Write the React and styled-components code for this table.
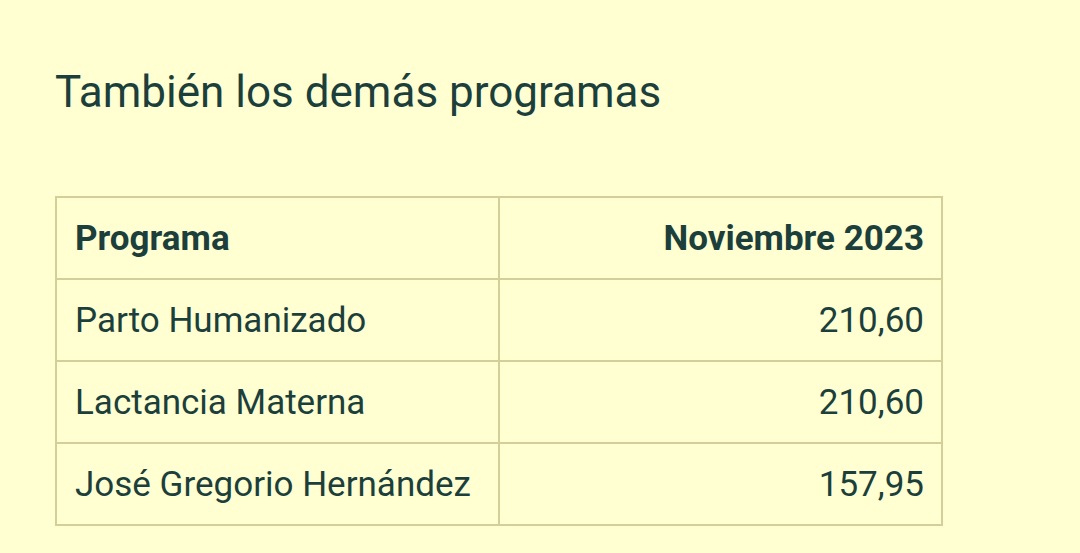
import React from "react";
import styled, { createGlobalStyle } from "styled-components";

const GlobalStyle = createGlobalStyle`
    html, body {
        margin: 0;
        padding: 0;
        background: #ffffd2;
    }
    body {
        font-family: Roboto, "Noto Sans", sans-serif;
        color: #1c3f3c;
    }
`;

const Page = styled.div`
    width: 1080px;
    height: 553px;
    padding: 66px 55px 0;
    box-sizing: border-box;
    overflow: hidden;
`;

const Title = styled.h2`
    margin: 0 0 78px;
    font-size: 44px;
    font-weight: 400;
    line-height: 52px;
`;

const Table = styled.table`
    width: 888px;
    border-collapse: collapse;
    font-size: 35px;
`;

const Cell = styled.td`
    border: 2px solid #d4cf98;
    height: 82px;
    padding: 0 17px 0 18px;
    box-sizing: border-box;
    text-align: ${({ $align }) => $align || "left"};
    font-weight: ${({ $bold }) => ($bold ? 700 : 400)};
    width: 50%;
`;

const rows = [
    ["Parto Humanizado", "210,60"],
    ["Lactancia Materna", "210,60"],
    ["José Gregorio Hernández", "157,95"],
];

function App() {
    return (
        <Page>
            <GlobalStyle />
            <Title>También los demás programas</Title>
            <Table>
                <thead>
                    <tr>
                        <Cell as="th" $bold>Programa</Cell>
                        <Cell as="th" $bold $align="right">
                            Noviembre 2023
                        </Cell>
                    </tr>
                </thead>
                <tbody>
                    {rows.map(([name, value]) => (
                        <tr key={name}>
                            <Cell>{name}</Cell>
                            <Cell $align="right">{value}</Cell>
                        </tr>
                    ))}
                </tbody>
            </Table>
        </Page>
    );
}

export default App;
